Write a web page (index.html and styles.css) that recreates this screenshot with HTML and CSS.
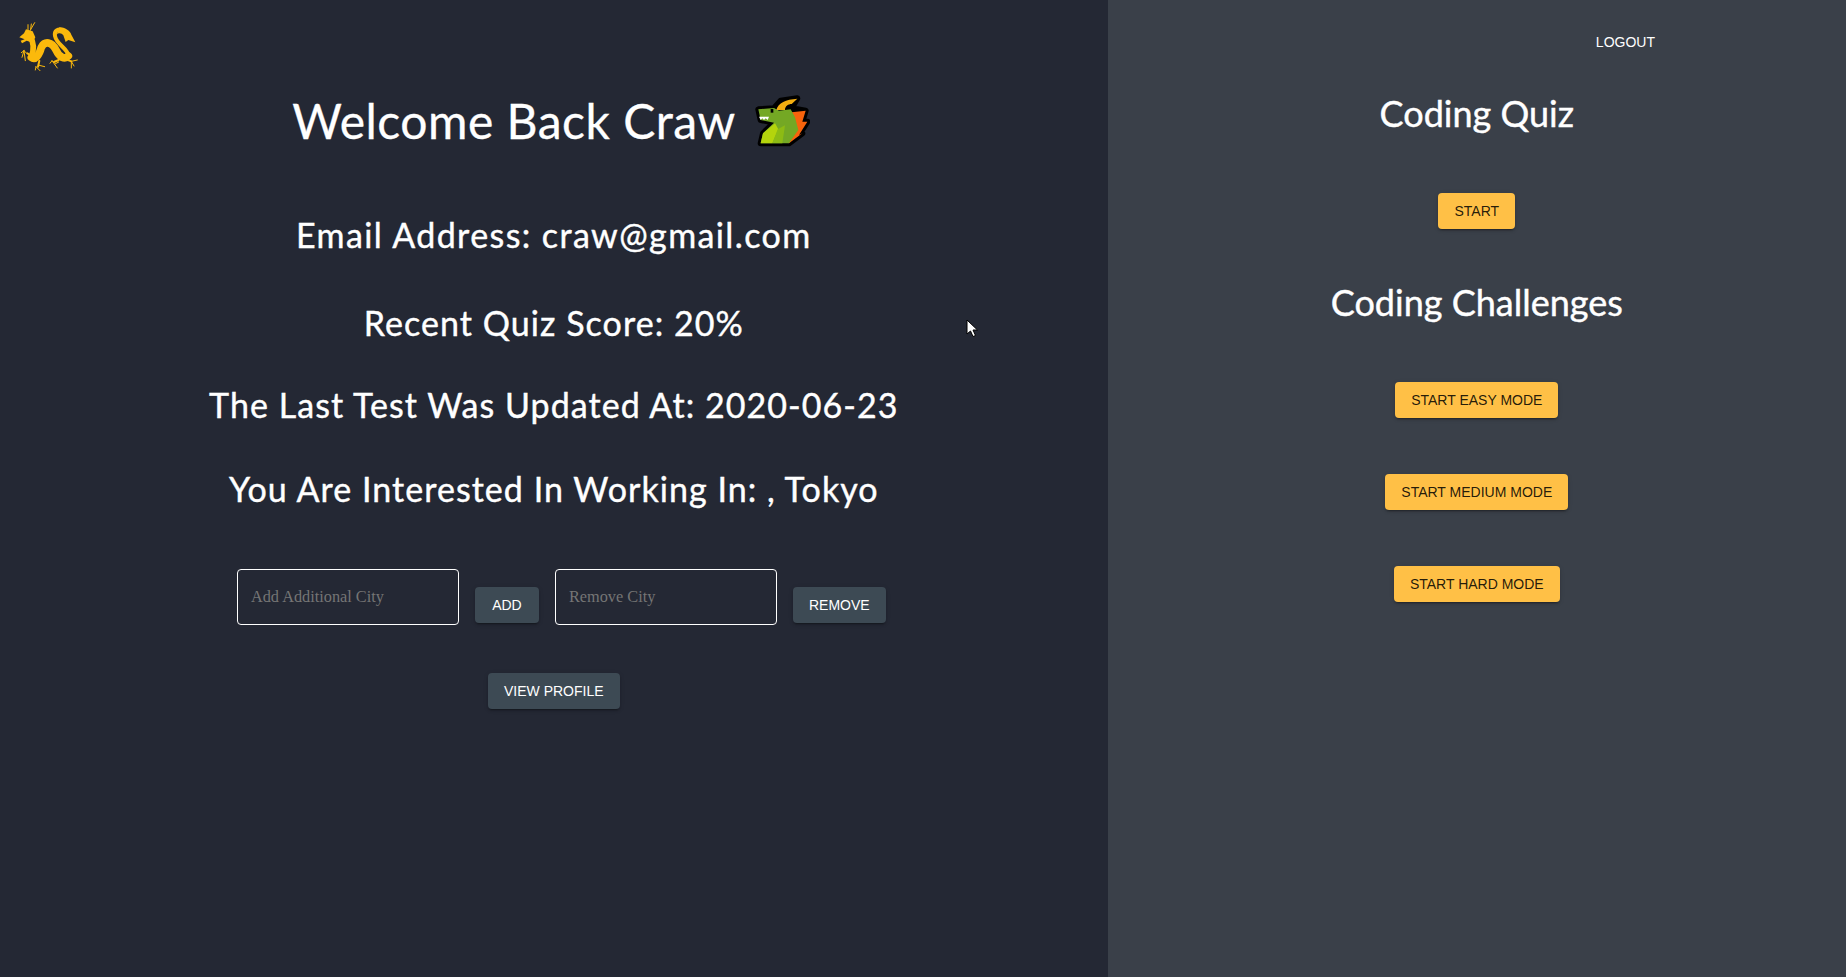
FILE: index.html

```html
<!DOCTYPE html>
<html lang="en">
<head>
  <meta charset="UTF-8" />
  <title>Dashboard</title>
  <link rel="stylesheet" href="styles.css">
</head>
<body>
  <div class="page">
    <div class="left">
      <svg class="logo" viewBox="0 0 360 270">
        <g fill="none" stroke="#fbb90c" stroke-linecap="round" stroke-linejoin="round">
          <path stroke-width="17" d="M90 110 C104 130 102 150 94 172"/>
          <path stroke-width="23" d="M94 172 C106 182 118 165 124 142 C135 122 155 125 168 150 C178 172 194 180 205 168"/>
          <path stroke-width="12" d="M205 168 C205 145 170 135 165 108 C162 92 174 86 188 90"/>
          <path stroke-width="3" d="M72 152 L64 158 M72 152 L76 182 M72 152 L66 172 M80 160 L72 152 M108 200 L120 212 M108 200 L106 210 M118 196 L134 200 M156 182 L172 204 M156 182 L150 190 M165 192 L176 186 M214 184 L214 204 M214 184 L232 180 M214 184 L222 198"/>
          <path stroke-width="6" d="M82 160 L96 168 M118 182 L114 200 M176 180 L162 186 M198 178 L214 184"/>
          <path stroke-width="3" d="M84 92 L84 74 M90 92 L104 68 M92 88 L94 72"/>
        </g>
        <path fill="#fbb90c" d="M58 112 L72 100 L78 88 L98 94 L106 112 L98 128 L80 122 L66 130 L62 122 L74 118 Z"/>
        <path fill="#fbb90c" d="M178 82 C195 82 210 92 214 104 L226 127 L205 120 L197 126 L190 106 C185 98 175 98 170 104 Z"/>
      </svg>

      <h1 class="title">Welcome Back Craw
        <svg class="emoji" viewBox="105 42 168 162">
          <path fill="#000" stroke="#000" stroke-width="18" stroke-linejoin="round" d="M118 88 L165 85 L185 62 L235 55 L218 85 L260 92 L250 125 L265 125 L240 165 L250 160 L210 190 L125 190 L132 160 L165 128 L125 120 Z"/>
          <path fill="#f7630c" d="M205 105 L218 97 L260 92 L250 125 L265 125 L240 165 L250 160 L210 190 Z"/>
          <path fill="#74a824" d="M118 88 L165 84 L180 92 L215 88 L228 112 L238 150 L210 190 L125 190 L132 160 L165 128 L125 120 Z"/>
          <path fill="#b4d40c" d="M168 130 L178 148 L160 190 L125 190 L132 160 Z"/>
          <path fill="#8dbb14" d="M176 148 L198 136 L190 190 L160 190 Z"/>
          <path fill="#f4ae10" d="M172 90 C178 68 200 58 235 56 L218 72 C208 72 198 78 198 90 Z"/>
          <rect x="155" y="87" width="8" height="11" fill="#000"/>
          <path fill="#fff" d="M120 110 L150 110 L146 120 L140 115 L135 120 L130 115 L125 120 Z"/>
        </svg>
      </h1>
      <h2 class="stat email">Email Address: craw@gmail.com</h2>
      <h2 class="stat score">Recent Quiz Score: 20%</h2>
      <h2 class="stat updated">The Last Test Was Updated At: 2020-06-23</h2>
      <h2 class="stat city">You Are Interested In Working In: , Tokyo</h2>

      <div class="city-form">
        <input class="city-input" type="text" placeholder="Add Additional City" />
        <button class="btn btn-dark add-btn">Add</button>
        <input class="city-input" type="text" placeholder="Remove City" />
        <button class="btn btn-dark add-btn">Remove</button>
      </div>
      <div class="profile-row">
        <button class="btn btn-dark">View Profile</button>
      </div>
    </div>

    <div class="right">
      <div class="top-bar">
        <button class="btn btn-text">Logout</button>
      </div>
      <h2 class="side-title">Coding Quiz</h2>
      <button class="btn btn-yellow start">Start</button>
      <h2 class="side-title second">Coding Challenges</h2>
      <button class="btn btn-yellow first">Start Easy Mode</button>
      <button class="btn btn-yellow next">Start Medium Mode</button>
      <button class="btn btn-yellow next">Start Hard Mode</button>
    </div>
  </div>

  <svg class="cursor" viewBox="0 0 13 19">
    <path fill="#fff" stroke="#000" stroke-width="1" d="M1 1 L1 15 L4.5 12 L7 17.5 L9.5 16.5 L7 11 L11.5 11 Z"/>
  </svg>
</body>
</html>
```

FILE: styles.css

```css
* {
  box-sizing: border-box;
}
body {
  margin: 0;
  font-family: "Lato", sans-serif;
  color: white;
  overflow: hidden;
}
.page {
  display: flex;
  height: 100vh;
}
.left {
  width: 60%;
  background: #242834;
  text-align: center;
}
.right {
  width: 40%;
  background: #3a4049;
  display: flex;
  flex-direction: column;
  align-items: center;
}
.logo {
  display: block;
  width: 120px;
  height: 90px;
  margin-bottom: 3px;
}
.title {
  margin: 0;
  padding-right: 5px;
  font-size: 48px;
  line-height: 56px;
  font-weight: 400;
  letter-spacing: 0.5px;
  -webkit-text-stroke: 0.3px white;
}
.emoji {
  width: 56px;
  height: 54px;
  vertical-align: -9px;
  margin-left: 7px;
}
.stat {
  margin: 0;
  font-size: 34px;
  line-height: 40px;
  font-weight: 400;
  letter-spacing: 1.05px;
  -webkit-text-stroke: 0.4px white;
}
.email {
  margin-top: 66px;
  letter-spacing: 1.4px;
}
.score { margin-top: 48px; }
.updated { margin-top: 42px; }
.city { margin-top: 44px; }

.city-form {
  display: flex;
  justify-content: center;
  align-items: flex-start;
  gap: 16px;
  margin-top: 60px;
  padding-left: 15px;
}
.city-input {
  width: 222px;
  height: 56px;
  padding: 0 13px;
  background: transparent;
  border: 1px solid white;
  border-radius: 4px;
  font-family: "Liberation Serif", serif;
  font-size: 16.3px;
  color: white;
}
.city-input::placeholder {
  color: #757575;
}
.add-btn {
  margin-top: 18px;
}
.profile-row {
  margin-top: 48px;
}

.btn {
  min-width: 64px;
  height: 36px;
  padding: 0 16px;
  border: none;
  border-radius: 4px;
  font-family: "Liberation Sans", Arial, sans-serif;
  font-size: 14px;
  text-transform: uppercase;
  box-shadow: 0 3px 1px -2px rgba(0,0,0,0.2), 0 2px 2px rgba(0,0,0,0.14), 0 1px 5px rgba(0,0,0,0.12);
}
.btn-dark {
  background: #3d4a54;
  color: white;
}
.btn-yellow {
  background: #ffc046;
  color: rgba(0,0,0,0.87);
}
.btn-text {
  background: transparent;
  color: white;
  box-shadow: none;
}

.top-bar {
  width: 100%;
  height: 91px;
  padding: 24px 175px 0 0;
  display: flex;
  justify-content: flex-end;
  align-items: flex-start;
}
.side-title {
  margin: 0;
  font-size: 36px;
  line-height: 44px;
  font-weight: 400;
  -webkit-text-stroke: 0.4px white;
}
.second { margin-top: 51px; }
.start { margin-top: 58px; }
.first { margin-top: 58px; }
.next { margin-top: 56px; }

.cursor {
  position: absolute;
  left: 966px;
  top: 319px;
  width: 13px;
  height: 19px;
}
```
